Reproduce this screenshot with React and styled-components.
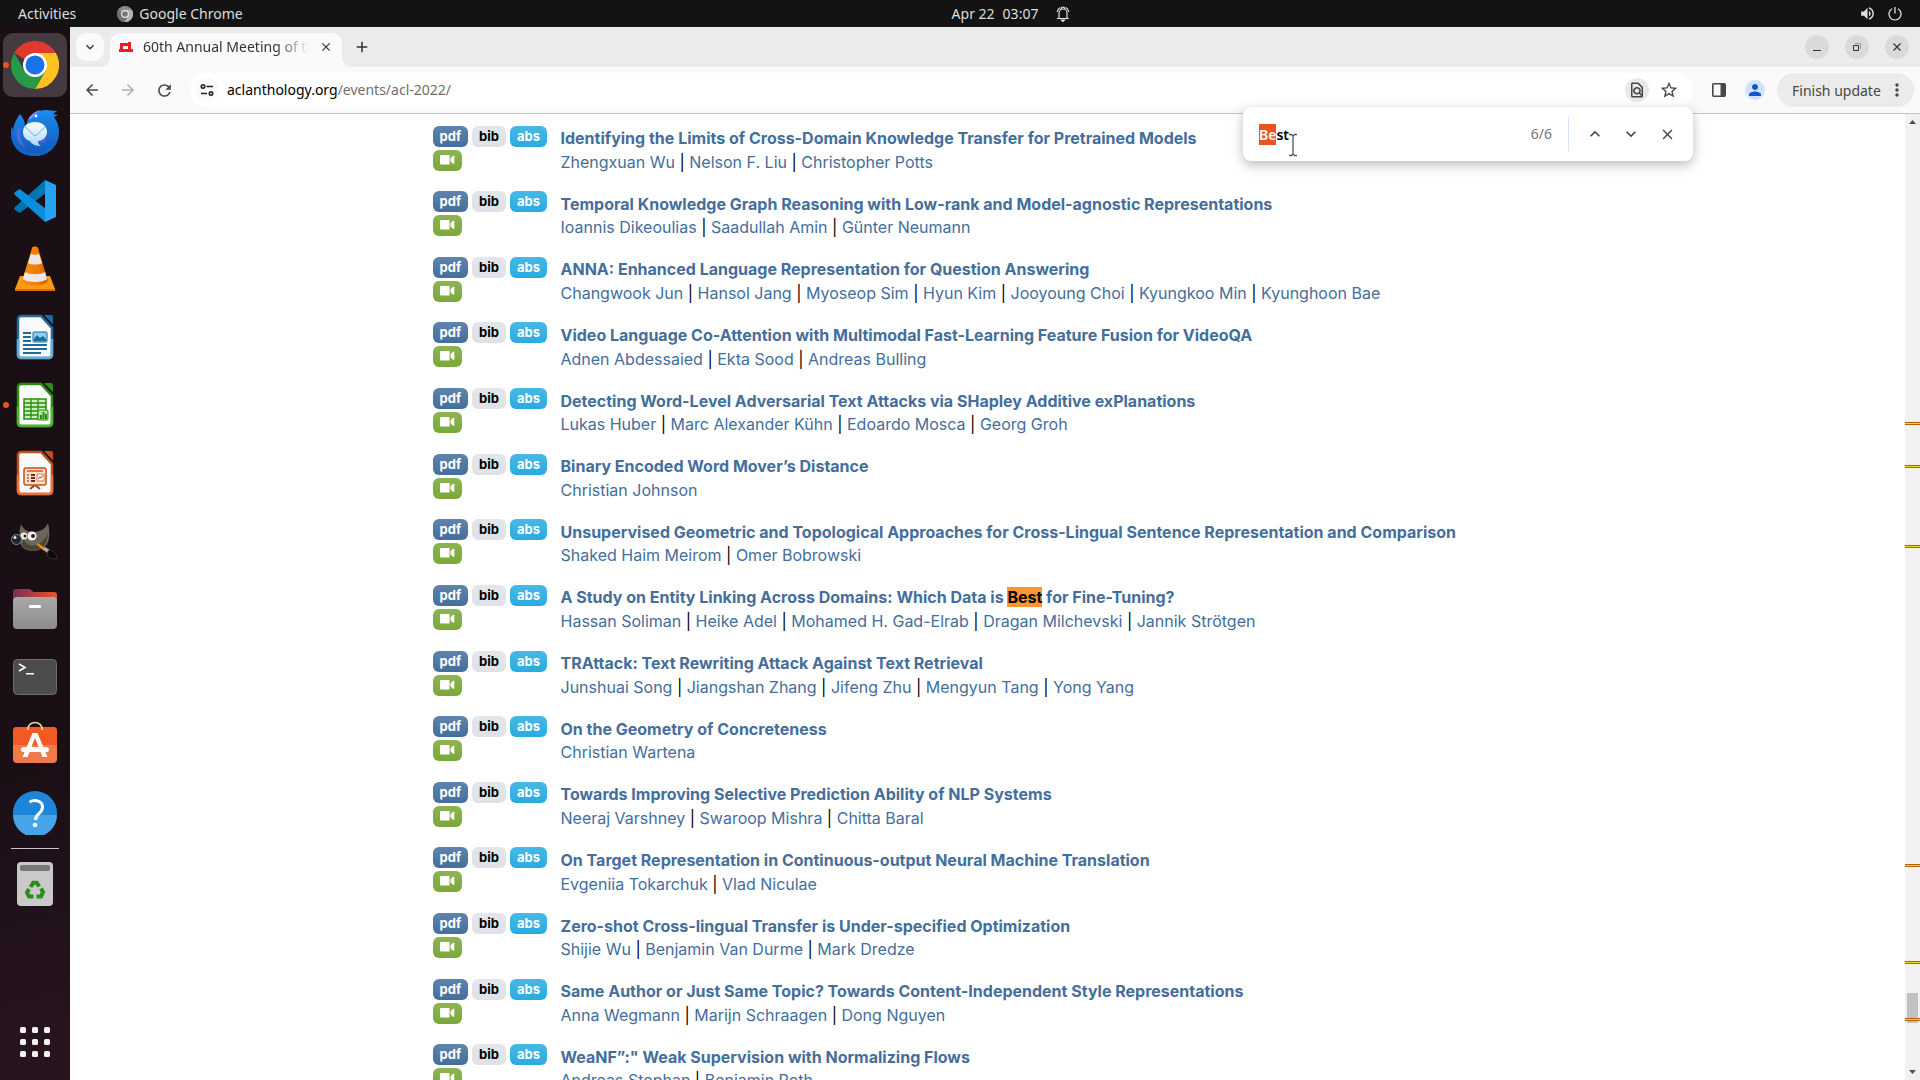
import { useEffect, useRef } from 'react'
import styled, { createGlobalStyle, css } from 'styled-components'
import {
    MdArrowBack, MdArrowForward, MdRefresh, MdStarOutline, MdOutlineFindInPage, MdKeyboardArrowUp,
    MdKeyboardArrowDown, MdClose, MdMoreVert, MdPerson, MdVolumeUp, MdAdd
} from 'react-icons/md'

const papers = [
    { title: 'Identifying the Limits of Cross-Domain Knowledge Transfer for Pretrained Models', authors: ['Zhengxuan Wu', 'Nelson F. Liu', 'Christopher Potts'] },
    { title: 'Temporal Knowledge Graph Reasoning with Low-rank and Model-agnostic Representations', authors: ['Ioannis Dikeoulias', 'Saadullah Amin', 'Günter Neumann'] },
    { title: 'ANNA: Enhanced Language Representation for Question Answering', authors: ['Changwook Jun', 'Hansol Jang', 'Myoseop Sim', 'Hyun Kim', 'Jooyoung Choi', 'Kyungkoo Min', 'Kyunghoon Bae'] },
    { title: 'Video Language Co-Attention with Multimodal Fast-Learning Feature Fusion for VideoQA', authors: ['Adnen Abdessaied', 'Ekta Sood', 'Andreas Bulling'] },
    { title: 'Detecting Word-Level Adversarial Text Attacks via SHapley Additive exPlanations', authors: ['Lukas Huber', 'Marc Alexander Kühn', 'Edoardo Mosca', 'Georg Groh'] },
    { title: 'Binary Encoded Word Mover’s Distance', authors: ['Christian Johnson'] },
    { title: 'Unsupervised Geometric and Topological Approaches for Cross-Lingual Sentence Representation and Comparison', authors: ['Shaked Haim Meirom', 'Omer Bobrowski'] },
    { title: 'A Study on Entity Linking Across Domains: Which Data is Best for Fine-Tuning?', authors: ['Hassan Soliman', 'Heike Adel', 'Mohamed H. Gad-Elrab', 'Dragan Milchevski', 'Jannik Strötgen'] },
    { title: 'TRAttack: Text Rewriting Attack Against Text Retrieval', authors: ['Junshuai Song', 'Jiangshan Zhang', 'Jifeng Zhu', 'Mengyun Tang', 'Yong Yang'] },
    { title: 'On the Geometry of Concreteness', authors: ['Christian Wartena'] },
    { title: 'Towards Improving Selective Prediction Ability of NLP Systems', authors: ['Neeraj Varshney', 'Swaroop Mishra', 'Chitta Baral'] },
    { title: 'On Target Representation in Continuous-output Neural Machine Translation', authors: ['Evgeniia Tokarchuk', 'Vlad Niculae'] },
    { title: 'Zero-shot Cross-lingual Transfer is Under-specified Optimization', authors: ['Shijie Wu', 'Benjamin Van Durme', 'Mark Dredze'] },
    { title: 'Same Author or Just Same Topic? Towards Content-Independent Style Representations', authors: ['Anna Wegmann', 'Marijn Schraagen', 'Dong Nguyen'] },
    { title: 'WeaNF”:" Weak Supervision with Normalizing Flows', authors: ['Andreas Stephan', 'Benjamin Roth'] }
]

// positions of the search hits along the scrollbar, in percent
const hits = [31.9, 36.3, 44.6, 77.6, 87.7, 93.6]

export default function App() {
    return (
        <Desktop>
            <GlobalStyle />
            <TopBar />
            <Workspace>
                <Dock />
                <Browser>
                    <TabStrip />
                    <Toolbar />
                    <Page />
                    <FindBar />
                </Browser>
            </Workspace>
        </Desktop>
    )
}

function TopBar() {
    return (
        <Panel>
            <PanelSide>
                <PanelButton>Activities</PanelButton>
                <PanelButton>
                    <svg width="16" height="16" viewBox="0 0 16 16">
                        <circle cx="8" cy="8" r="8" fill="#8d8d8d" />
                        <path d="M8 8 1.1 4A8 8 0 0 0 7.5 16L11.5 9.500Z" fill="#6f6f6f" />
                        <path d="M8 4h7a8 8 0 0 1-7.500 12L11.500 9.500Z" fill="#b3b3b3" />
                        <circle cx="8" cy="8" r="4" fill="#e6e6e6" />
                        <circle cx="8" cy="8" r="2.800" fill="#777" />
                    </svg>
                    Google Chrome
                </PanelButton>
            </PanelSide>
            <Clock>
                <span>Apr 22</span>
                <span>03:07</span>
                <svg width="14" height="16" viewBox="0 0 14 16" fill="none" stroke="#ddd" strokeWidth="1.2">
                    <path d="M1 12.500h12M3 12.500V7a4 4 0 0 1 8 0v5.500M1.200 6a6 6 0 0 1 3-4.500M12.800 6a6 6 0 0 0-3-4.500M5 2.800C5.500.5 8.500.5 9 2.800" />
                    <path d="M5.500 14h3L7 15.500Z" fill="#ddd" />
                </svg>
            </Clock>
            <PanelSide $end>
                <PanelButton aria-label="Volume"><MdVolumeUp size={17} /></PanelButton>
                <PanelButton aria-label="Power">
                    <svg width="14" height="14" viewBox="0 0 14 14" fill="none" stroke="#eee" strokeWidth="1.2">
                        <path d="M4 1.800a6 6 0 1 0 6 0M7 0v6.500" />
                    </svg>
                </PanelButton>
            </PanelSide>
        </Panel>
    )
}

function Dock() {
    return (
        <DockBar aria-label="Dock">
            <DockItem $active $running aria-label="Google Chrome"><ChromeIcon /></DockItem>
            <DockItem aria-label="Thunderbird"><ThunderbirdIcon /></DockItem>
            <DockItem aria-label="Visual Studio Code"><CodeIcon /></DockItem>
            <DockItem aria-label="VLC"><VlcIcon /></DockItem>
            <DockItem aria-label="LibreOffice Writer"><OfficeIcon kind="writer" color="#1d6a9c" light="#5aaede" /></DockItem>
            <DockItem $running aria-label="LibreOffice Calc"><OfficeIcon kind="calc" color="#2c8c12" light="#47b82c" /></DockItem>
            <DockItem aria-label="LibreOffice Impress"><OfficeIcon kind="impress" color="#c2501c" light="#e9723a" /></DockItem>
            <DockItem aria-label="GIMP"><GimpIcon /></DockItem>
            <DockItem aria-label="Files"><FilesIcon /></DockItem>
            <DockItem aria-label="Terminal"><TerminalIcon /></DockItem>
            <DockItem aria-label="Ubuntu Software"><StoreIcon /></DockItem>
            <DockItem aria-label="Help"><HelpIcon /></DockItem>
            <DockLine />
            <DockItem aria-label="Trash"><TrashIcon /></DockItem>
            <AppsButton aria-label="Show Applications">
                <svg width="30" height="30" viewBox="0 0 30 30" fill="#f2f1f0">
                    {[0, 12, 24].map(y => [0, 12, 24].map(x => <rect key={x + '-' + y} x={x} y={y} width="6" height="6" rx="1.500" />))}
                </svg>
            </AppsButton>
        </DockBar>
    )
}

function TabStrip() {
    return (
        <Tabs>
            <TabSearch aria-label="Search tabs"><MdKeyboardArrowDown size={16} /></TabSearch>
            <Tab>
                <svg width="14" height="10" viewBox="0 0 14 10">
                    <path fill="#ed1c24" fillRule="evenodd" d="M1 1h8V0h3v7h2v3H0V7h1ZM4 4v3h5V4Z" />
                </svg>
                <TabTitle>60th Annual Meeting of the</TabTitle>
                <TabClose aria-label="Close tab"><MdClose size={14} /></TabClose>
            </Tab>
            <NewTab aria-label="New tab"><MdAdd size={18} /></NewTab>
            <WindowButtons>
                <WindowButton aria-label="Minimize">
                    <svg width="10" height="10" viewBox="0 0 10 10"><path d="M1 8.500h8" stroke="#333" /></svg>
                </WindowButton>
                <WindowButton aria-label="Restore">
                    <svg width="10" height="10" viewBox="0 0 10 10" fill="none" stroke="#333">
                        <path d="M1.500 3.500h5v5h-5z" /><path d="M3 1.500h5.500V7" stroke="#999" />
                    </svg>
                </WindowButton>
                <WindowButton aria-label="Close">
                    <svg width="10" height="10" viewBox="0 0 10 10"><path d="M1.500 1.500l7 7M8.500 1.500l-7 7" stroke="#333" strokeWidth="1.200" /></svg>
                </WindowButton>
            </WindowButtons>
        </Tabs>
    )
}

function Toolbar() {
    return (
        <Tools>
            <ToolButton aria-label="Back"><MdArrowBack size={18} /></ToolButton>
            <ToolButton aria-label="Forward" disabled><MdArrowForward size={18} /></ToolButton>
            <ToolButton aria-label="Reload"><MdRefresh size={19} /></ToolButton>
            <Omnibox>
                <RoundButton aria-label="View site information">
                    <svg width="14" height="12" viewBox="0 0 14 12" fill="none" stroke="#1f1f1f" strokeWidth="1.600">
                        <circle cx="3" cy="2.500" r="1.700" /><path d="M6.500 2.500H13M1 9.500h6" /><circle cx="11" cy="9.500" r="1.700" />
                    </svg>
                </RoundButton>
                <Url role="textbox" aria-label="Address and search bar">aclanthology.org<UrlPath>/events/acl-2022/</UrlPath></Url>
                <RoundButton $shaded aria-label="Find in page"><MdOutlineFindInPage size={18} /></RoundButton>
                <StarButton aria-label="Bookmark this tab"><MdStarOutline size={20} /></StarButton>
            </Omnibox>
            <ToolButton aria-label="Side panel">
                <svg width="16" height="16" viewBox="0 0 16 16">
                    <rect x="1.800" y="1.800" width="12.400" height="12.400" rx="1" fill="none" stroke="#474747" strokeWidth="1.600" />
                    <path d="M9.500 1.500H14v13H9.500z" fill="#474747" />
                </svg>
            </ToolButton>
            <Profile aria-label="Profile"><MdPerson size={18} /></Profile>
            <UpdateButton>Finish update<MdMoreVert size={20} /></UpdateButton>
        </Tools>
    )
}

function FindBar() {
    const input = useRef(null)

    useEffect(() => {
        input.current.focus()
        input.current.setSelectionRange(0, 2)
    }, [])

    return (
        <Find>
            <FindInput ref={input} defaultValue="Best" aria-label="Find" spellCheck={false} />
            <FindCount>6/6</FindCount>
            <FindButton aria-label="Previous"><MdKeyboardArrowUp size={20} /></FindButton>
            <FindButton aria-label="Next"><MdKeyboardArrowDown size={20} /></FindButton>
            <FindButton aria-label="Close find bar"><MdClose size={17} /></FindButton>
            <Pointer width="10" height="24" viewBox="0 0 10 24" fill="none">
                <path d="M1 1.500h2.500L5 3l1.500-1.500H9M5 3v18M1 22.500h2.500L5 21l1.500 1.500H9" stroke="#fff" strokeWidth="3" />
                <path d="M1 1.500h2.500L5 3l1.500-1.500H9M5 3v18M1 22.500h2.500L5 21l1.500 1.500H9" stroke="#555" strokeWidth="1.300" />
            </Pointer>
        </Find>
    )
}

function Page() {
    return (
        <Viewport>
            <Content>
                <Container>
                    {papers.map(paper => <Paper key={paper.title} {...paper} />)}
                </Container>
            </Content>
            <Scrollbar>
                <ScrollArrow width="7" height="4" viewBox="0 0 7 4"><path d="M0 4 3.500 0 7 4Z" fill="#505050" /></ScrollArrow>
                <ScrollThumb />
                {hits.map(hit => <ScrollHit key={hit} style={{ top: `${hit}%` }} />)}
                <ScrollArrow width="7" height="4" viewBox="0 0 7 4"><path d="M0 0h7L3.500 4Z" fill="#505050" /></ScrollArrow>
            </Scrollbar>
        </Viewport>
    )
}

function Paper({ title, authors }) {
    const [before, after] = title.split('Best')

    return (
        <Entry>
            <Badges>
                <Badge href="#" $color="primary">pdf</Badge>
                <Badge href="#" $color="secondary">bib</Badge>
                <Badge href="#" $color="info">abs</Badge>
                <br />
                <Badge href="#" $color="success" aria-label="Video">
                    <svg width="15" height="10" viewBox="0 0 15 10" fill="#fff">
                        <path d="M1 0h8.500v9.500H1A1 1 0 0 1 0 8.500V1A1 1 0 0 1 1 0ZM10.500 3.200 13 .8h1.300v7.900H13L10.500 6.300Z" />
                    </svg>
                </Badge>
            </Badges>
            <Details>
                <PaperTitle href="#">{before}{after !== undefined && <><Match>Best</Match>{after}</>}</PaperTitle>
                <br />
                {authors.map((author, i) => (
                    <span key={author}>{i > 0 && ' | '}<Author href="#">{author}</Author></span>
                ))}
            </Details>
        </Entry>
    )
}

function ChromeIcon() {
    return (
        <svg width="48" height="48" viewBox="0 0 48 48">
            <path d="M24 24 3.200 12A24 24 0 0 1 44.800 12Z" fill="#df3a2e" />
            <path d="M24 12h20.800A24 24 0 0 1 24 48L34.400 30Z" fill="#fcc31e" />
            <path d="M3.200 12A24 24 0 0 0 24 48L34.400 30 13.600 30Z" fill="#269a48" />
            <circle cx="24" cy="24" r="12" fill="#fff" />
            <circle cx="24" cy="24" r="9.500" fill="#1a73e8" />
        </svg>
    )
}

function ThunderbirdIcon() {
    return (
        <svg width="48" height="48" viewBox="0 0 48 48">
            <defs>
                <linearGradient id="bird" x1="0" y1="0" x2="0" y2="1"><stop stopColor="#1b8cf0" /><stop offset="1" stopColor="#1256b8" /></linearGradient>
                <linearGradient id="mail" x1="0" y1="0" x2="0" y2="1"><stop stopColor="#fff" /><stop offset="1" stopColor="#a9d8fb" /></linearGradient>
            </defs>
            <path d="M16 14C20 4 27 1 35 1c4 0 7 1 11 1l-4 3 5 1-4 2c3 4 5 9 5 15 0 14-10 24-24 24S0 38 0 24c0-2 0-4 .7-6L2 21C3 14 6 9 9 5c3 4 5 7 5 12Z" fill="url(#bird)" />
            <path d="M2 21c-1 10 4 19 14 22 12 4 24-2 29-11-3 10-12 15-21 15C10 47 0 38 0 24c0-2 0-4 .7-6Z" fill="#1265ce" />
            <path d="M16 14C18 6 24 2 30 1c-4 2-7 4-8 7l-6 4Z" fill="#a58cf3" />
            <path d="M7 18c-4 9 0 18 8 21-5-5-7-12-5-20Z" fill="#4d6bdf" />
            <path d="M38 26c-2 5-6 7-12 7 5 3 10 0 12-7Z" fill="#6258d4" />
            <circle cx="25" cy="7" r="1.400" fill="#fff" />
            <path d="M12 23c0-6 5-10 12-10s12 4 12 10c0 5-4 9-9 9 0 2 1 4 3 5-7 0-10-3-11-5-4-1-7-4-7-9Z" fill="url(#mail)" />
            <path d="M14 18c4 3 6 6 10 9 4-3 7-6 10-9" fill="none" stroke="#6aa9df" />
        </svg>
    )
}

function CodeIcon() {
    return (
        <svg width="42" height="42" viewBox="0 0 42 42">
            <path d="M31 0 1 27c-1 1-1 2 0 3l3 2c1 1 2 1 3 0L32 13Z" fill="#0073b5" />
            <path d="M31 42 1 15c-1-1-1-2 0-3l3-2c1-1 2-1 3 0l25 19Z" fill="#0a8ddb" />
            <path d="M31 0 42 5v32l-11 5Z" fill="#25a3f0" />
        </svg>
    )
}

function VlcIcon() {
    return (
        <svg width="42" height="46" viewBox="0 0 42 46">
            <defs><linearGradient id="cone"><stop stopColor="#f68b11" /><stop offset=".6" stopColor="#f07d05" /><stop offset="1" stopColor="#c95e00" /></linearGradient></defs>
            <path d="M6 30h30l5 13v2H1v-2Z" fill="#fb9a18" /><path d="M1 43h40v2H1Z" fill="#dc6d02" />
            <path d="M18 2c0-2 6-2 6 0l10 33c-4 6-22 6-26 0Z" fill="url(#cone)" />
            <path d="m17 8-3 9c3 2 11 2 14 0l-3-9c-2 1-6 1-8 0ZM11 26l-2 7c4 4 20 4 24 0l-2-7c-4 3-16 3-20 0Z" fill="#e9e9e9" />
        </svg>
    )
}

function OfficeIcon({ kind, color, light }) {
    return (
        <svg width="38" height="46" viewBox="0 0 38 46">
            <path d="M5 2h20l11 12v27a3 3 0 0 1-3 3H5a3 3 0 0 1-3-3V5a3 3 0 0 1 3-3Z" fill="#fafafa" stroke={color} strokeWidth="2.500" />
            <path d="M2 25v16a3 3 0 0 0 3 3h28a3 3 0 0 0 3-3V25" fill="none" stroke={light} strokeWidth="2.500" />
            <path d="M28 1h7a2 2 0 0 1 2 2v7.500Z" fill={color} />
            {kind === 'writer' && <g fill={color}>
                <path d="M7 18h8v2H7zM7 22h8v2H7zM7 26h8v2H7zM7 30h24v2H7zM7 34h24v2H7zM7 38h18v2H7z" />
                <rect x="17" y="18" width="14" height="10" rx="1" fill="#8fcdf2" stroke={color} />
                <path d="M18 27v-2l3-4 3 3 3-2 3 3v2Z" />
            </g>}
            {kind === 'calc' && <g>
                <path d="M8 17h22v20H8Z" fill="#c7f0bb" stroke={color} strokeWidth="1.500" />
                <path d="M8 21h22M8 25h22M8 29h22M8 33h22M15 17v20M22 17v20" stroke={color} strokeWidth="1.300" />
                <rect x="22" y="28" width="10" height="10" rx="1" fill="#aee79c" stroke={color} />
                <path d="M24 33h2v4h-2zM26.500 30h2v7h-2zM29 32h2v5h-2z" fill={color} />
            </g>}
            {kind === 'impress' && <g>
                <path d="M14 39l5-4 5 4" fill="none" stroke="#9a4520" strokeWidth="2" />
                <rect x="8" y="18" width="22" height="17" rx="2" fill="#fbe3d6" stroke={color} strokeWidth="1.500" />
                <path d="M11 20h16v2H11Z" fill={light} /><path d="M15 24h4v2h-4zM15 27h4v2h-4zM15 30h4v2h-4z" fill="#6d2b10" />
                <path d="M11 24h2v2h-2zM11 27h2v2h-2zM11 30h2v2h-2z" fill={light} />
                <path d="M21 24h7v7h-7Z" fill="#fff" stroke={light} /><path d="m22 29 2-2 1 1 2-3" fill="none" stroke={color} />
            </g>}
        </svg>
    )
}

function GimpIcon() {
    return (
        <svg width="48" height="40" viewBox="0 0 48 40">
            <path d="M10 3c2 5 6 8 12 8 8 0 13-4 15-9 3 12 1 22-5 25-8 5-19 3-22-3-2-6-2-14 0-21Z" fill="#6a6558" />
            <path d="M12 18c6 10 18 9 25-6-1 8-3 13-6 15-8 4-17 2-20-3Z" fill="#48443a" />
            <circle cx="13" cy="15" r="3.500" fill="#eee" /><circle cx="21" cy="15" r="4.500" fill="#f7f7f7" />
            <circle cx="14" cy="15" r="1.500" fill="#222" /><circle cx="22" cy="15" r="2" fill="#222" />
            <circle cx="5.500" cy="18.500" r="5" fill="#20272b" stroke="#7c8b91" /><circle cx="4" cy="16.500" r="1.500" fill="#e4e9eb" />
            <path d="m26 22 9 5-2 3-7-6Z" fill="#f08a17" /><path d="m34 26 5 3-2 4-4-4Z" fill="#a9b3b8" />
            <path d="M38 29c4 0 8 4 8 9-5 0-10-1-10-6Z" fill="#0a0a0a" stroke="#333" />
        </svg>
    )
}

function FilesIcon() {
    return (
        <svg width="44" height="42" viewBox="0 0 44 42">
            <defs>
                <linearGradient id="folder"><stop stopColor="#7b2c58" /><stop offset="1" stopColor="#e8562a" /></linearGradient>
                <linearGradient id="drawer" x1="0" y1="0" x2="0" y2="1"><stop stopColor="#a9a9a9" /><stop offset="1" stopColor="#8c8c8c" /></linearGradient>
            </defs>
            <path d="M3 1h13c2 0 3 3 5 3h20a3 3 0 0 1 3 3v12H0V4a3 3 0 0 1 3-3Z" fill="url(#folder)" />
            <rect y="9" width="44" height="32" rx="4" fill="url(#drawer)" />
            <rect x="16" y="17" width="12" height="3" rx="1" fill="#fff" />
        </svg>
    )
}

function TerminalIcon() {
    return (
        <svg width="44" height="36" viewBox="0 0 44 36">
            <rect x=".5" y=".5" width="43" height="35" rx="4" fill="#4c4c4c" stroke="#6e6e6e" />
            <path d="m6 5 6 3.500L6 12M13 14.800h8" fill="none" stroke="#fff" strokeWidth="1.600" />
        </svg>
    )
}

function StoreIcon() {
    return (
        <svg width="44" height="48" viewBox="0 0 44 48">
            <rect y="6" width="44" height="36" rx="4" fill="#f07a48" />
            <path d="M4 6h36a4 4 0 0 1 4 4v14H0V10a4 4 0 0 1 4-4Z" fill="#f15a24" />
            <path d="M15 9C14-1 30-1 29 9" fill="none" stroke="#f8cf91" strokeWidth="1.600" />
            <path d="M19.500 12h5l10 24h-5L22 17l-7.500 19h-5Z" fill="#fff" />
            <rect x="8" y="26" width="28" height="5" rx="2.500" fill="#fff" />
        </svg>
    )
}

function HelpIcon() {
    return (
        <svg width="44" height="44" viewBox="0 0 44 44">
            <circle cx="22" cy="22" r="22" fill="#1e86d8" />
            <path d="M0 24a22 22 0 0 0 44 0Z" fill="#46a4e8" />
            <path d="M16.500 11c6-3 13-1 13 5 0 7-7 6-7 13" fill="none" stroke="#fff" strokeWidth="3" />
            <circle cx="22" cy="34" r="2.300" fill="#fff" />
        </svg>
    )
}

function TrashIcon() {
    return (
        <svg width="36" height="44" viewBox="0 0 36 44">
            <rect width="36" height="44" rx="4" fill="#c9c9c9" />
            <rect x="3" y="3" width="30" height="6" rx="2" fill="#767676" />
            <g fill="none" stroke="#2c8c20" strokeWidth="4">
                <path d="m13.500 25 2.700-4.200h3.600l2.400 3.700" /><path d="m24 26.500 2 3.500-2 4.500h-4.500" /><path d="M16.500 34.500H12L10 30.500l2-3.500" />
            </g>
        </svg>
    )
}

const GlobalStyle = createGlobalStyle`
    * {
        box-sizing: border-box;
    }
    body {
        margin: 0;
        font-family: Inter, 'Liberation Sans', sans-serif;
        font-size: 16px;
        line-height: 1.5;
        color: #000;
        overflow: hidden;
    }
    button, input {
        border: 0;
        padding: 0;
        background: none;
        font: inherit;
        color: inherit;
    }
    a {
        text-decoration: none;
    }
    svg {
        flex-shrink: 0;
    }
`
const uiFont = css`
    font-family: 'Noto Sans', 'Open Sans', sans-serif;
    font-size: 14px;
`
const centered = css`
    display: flex;
    align-items: center;
    justify-content: center;
`
const Desktop = styled.div`
    display: flex;
    flex-direction: column;
    height: 100vh;
`
const Panel = styled.header`
    ${uiFont}
    display: flex;
    align-items: center;
    height: 27px;
    padding: 0 18px;
    background: #131313;
    color: #dedede;
`
const PanelSide = styled.div`
    display: flex;
    flex: 1;
    gap: ${props => props.$end ? '12px' : '41px'};
    justify-content: ${props => props.$end ? 'flex-end' : 'flex-start'};
`
const PanelButton = styled.button`
    display: flex;
    align-items: center;
    gap: 6px;
`
const Clock = styled.div`
    display: flex;
    align-items: center;
    gap: 8px;
    padding-left: 102px;

    svg {
        margin-left: 10px;
    }
`
const Workspace = styled.div`
    display: flex;
    flex: 1;
    min-height: 0;
`
const DockBar = styled.nav`
    display: flex;
    flex-direction: column;
    align-items: center;
    gap: 4px;
    width: 70px;
    padding: 6px 3px;
    background: linear-gradient(165deg, #1b0f16 70%, #28141f);
`
const DockItem = styled.button`
    ${centered}
    position: relative;
    width: 64px;
    height: 64px;
    border-radius: 10px;
    background: ${props => props.$active ? '#443a40' : 'none'};

    &::before {
        content: '';
        display: ${props => props.$running ? 'block' : 'none'};
        position: absolute;
        left: 0;
        top: 29px;
        width: 6px;
        height: 6px;
        border-radius: 50%;
        background: #e95420;
    }
`
const DockLine = styled.hr`
    width: 48px;
    height: 1px;
    margin: -1px 0;
    border: 0;
    background: #c8c3c6;
`
const AppsButton = styled.button`
    ${centered}
    width: 64px;
    height: 64px;
    margin-top: auto;
`
const Browser = styled.main`
    position: relative;
    display: flex;
    flex-direction: column;
    flex: 1;
    min-width: 0;
    background: #fff;
`
const Tabs = styled.div`
    ${uiFont}
    display: flex;
    align-items: center;
    height: 40px;
    padding: 0 11px 0 6px;
    background: #ebebeb;
    color: #333;
`
const TabSearch = styled.button`
    ${centered}
    width: 28px;
    height: 28px;
    border-radius: 10px;
    background: #fafafa;
`
const Tab = styled.div`
    position: relative;
    display: flex;
    align-items: center;
    align-self: flex-end;
    width: 232px;
    height: 34px;
    margin-left: 6px;
    padding: 0 9px 6px;
    border-radius: 10px 10px 0 0;
    background: #fafafa;

    &::before, &::after {
        content: '';
        position: absolute;
        bottom: 0;
        width: 10px;
        height: 10px;
    }
    &::before {
        right: 100%;
        background: radial-gradient(circle at 0 0, #ebebeb 10px, #fafafa 10px);
    }
    &::after {
        left: 100%;
        background: radial-gradient(circle at 100% 0, #ebebeb 10px, #fafafa 10px);
    }
`
const TabTitle = styled.span`
    flex: 1;
    margin: 0 10px;
    padding-bottom: 2px;
    overflow: hidden;
    white-space: nowrap;
    mask-image: linear-gradient(90deg, #000 80%, transparent);
`
const TabClose = styled.button`
    ${centered}
    width: 14px;
    height: 14px;
`
const NewTab = styled.button`
    ${centered}
    width: 28px;
    height: 28px;
    margin-left: 6px;
`
const WindowButtons = styled.div`
    display: flex;
    gap: 16px;
    margin-left: auto;
`
const WindowButton = styled.button`
    ${centered}
    width: 24px;
    height: 24px;
    border-radius: 50%;
    background: #dadada;
`
const Tools = styled.div`
    ${uiFont}
    display: flex;
    align-items: center;
    gap: 8px;
    height: 47px;
    padding: 0 6px 0 8px;
    background: #fafafa;
    border-bottom: 1px solid #c4c4c4;
`
const ToolButton = styled.button`
    ${centered}
    width: 28px;
    height: 28px;
    color: #474747;

    &:disabled {
        color: #b0b0b0;
    }
`
const Omnibox = styled.div`
    display: flex;
    align-items: center;
    flex: 1;
    height: 34px;
    margin: 0 4px;
    padding: 0 12px 0 5px;
    border-radius: 17px;
    background: #fff;
`
const RoundButton = styled.button`
    ${centered}
    width: 24px;
    height: 24px;
    border-radius: 50%;
    color: #474747;
    background: ${props => props.$shaded ? '#e9e9e9' : '#fafafa'};
`
const StarButton = styled(RoundButton)`
    margin-left: 8px;
    background: none;
`
const Url = styled.div`
    flex: 1;
    margin-left: 8px;
    padding-bottom: 2px;
`
const UrlPath = styled.span`
    color: #6e6e6e;
`
const Profile = styled.button`
    ${centered}
    width: 20px;
    height: 20px;
    margin-left: 4px;
    border-radius: 50%;
    background: #d3e3fd;
    color: #0b57d0;
`
const UpdateButton = styled.button`
    display: flex;
    align-items: center;
    justify-content: space-between;
    width: 137px;
    height: 34px;
    margin-left: 4px;
    padding: 0 7px 0 15px;
    border-radius: 17px;
    background: #ebebeb;
    color: #474747;
`
const Find = styled.div`
    ${uiFont}
    position: absolute;
    top: 80px;
    right: 227px;
    display: flex;
    align-items: center;
    gap: 8px;
    width: 450px;
    height: 54px;
    padding: 0 12px 0 16px;
    border-radius: 8px;
    background: #fff;
    box-shadow: 0 4px 12px rgba(60, 64, 67, .35);
    color: #474747;
`
const FindInput = styled.input`
    flex: 1;
    min-width: 0;
    outline: none;
    color: #000;
    font-weight: 600;

    &::selection {
        background: #e95420;
        color: #fff;
    }
`
const FindCount = styled.span`
    padding-right: 16px;
    border-right: 1px solid #d3e3fd;
    line-height: 34px;
    color: #757575;
    margin-right: 4px;
`
const FindButton = styled.button`
    ${centered}
    width: 28px;
    height: 28px;
`
const Pointer = styled.svg`
    position: absolute;
    left: 45px;
    top: 26px;
`
const Viewport = styled.div`
    display: flex;
    flex: 1;
    min-height: 0;
`
const Content = styled.div`
    flex: 1;
    overflow: hidden;
    padding-top: 10px;
`
const Container = styled.div`
    max-width: 1140px;
    margin: 0 auto;
    padding: 0 15px;
`
const Entry = styled.article`
    display: flex;
    margin-bottom: 16px;
`
const Badges = styled.div`
    width: 128px;
    flex-shrink: 0;
    white-space: nowrap;
    font-size: 0;
    line-height: 24px;
`
const badgeColors = {
    primary: 'linear-gradient(#6084ac, #446e9b)',
    secondary: 'linear-gradient(#e3e6ea, #dee2e6)',
    info: 'linear-gradient(#49b8e5, #29abe0)',
    success: 'linear-gradient(#8db453, #7aa838)'
}
const Badge = styled.a`
    display: inline-block;
    margin-right: 4px;
    padding: 4px 7px;
    border-radius: 6px;
    background: ${props => badgeColors[props.$color]};
    color: ${props => props.$color === 'secondary' ? '#000' : '#fff'};
    font-size: 13px;
    font-weight: 700;
    line-height: 13px;
    vertical-align: middle;

    svg {
        display: block;
        margin: 1px 0 2px;
    }
`
const Details = styled.div`
    min-width: 0;
`
const PaperTitle = styled.a`
    color: #446e9b;
    font-weight: 700;
    vertical-align: middle;
`
const Match = styled.mark`
    background: #ff9632;
    color: #000;
`
const Author = styled.a`
    color: #446e9b;
`
const Scrollbar = styled.div`
    position: relative;
    display: flex;
    flex-direction: column;
    align-items: center;
    justify-content: space-between;
    width: 15px;
    padding: 6px 0;
    background: #f1f1f1;
`
const ScrollArrow = styled.svg`
    display: block;
`
const ScrollThumb = styled.div`
    position: absolute;
    top: 91%;
    left: 2px;
    width: 11px;
    height: 30px;
    background: #c1c1c1;
`
const ScrollHit = styled.div`
    position: absolute;
    left: 0;
    right: 0;
    height: 3px;
    background: #ffdd00;
    border: solid #b06000;
    border-width: 1px 0;
`
